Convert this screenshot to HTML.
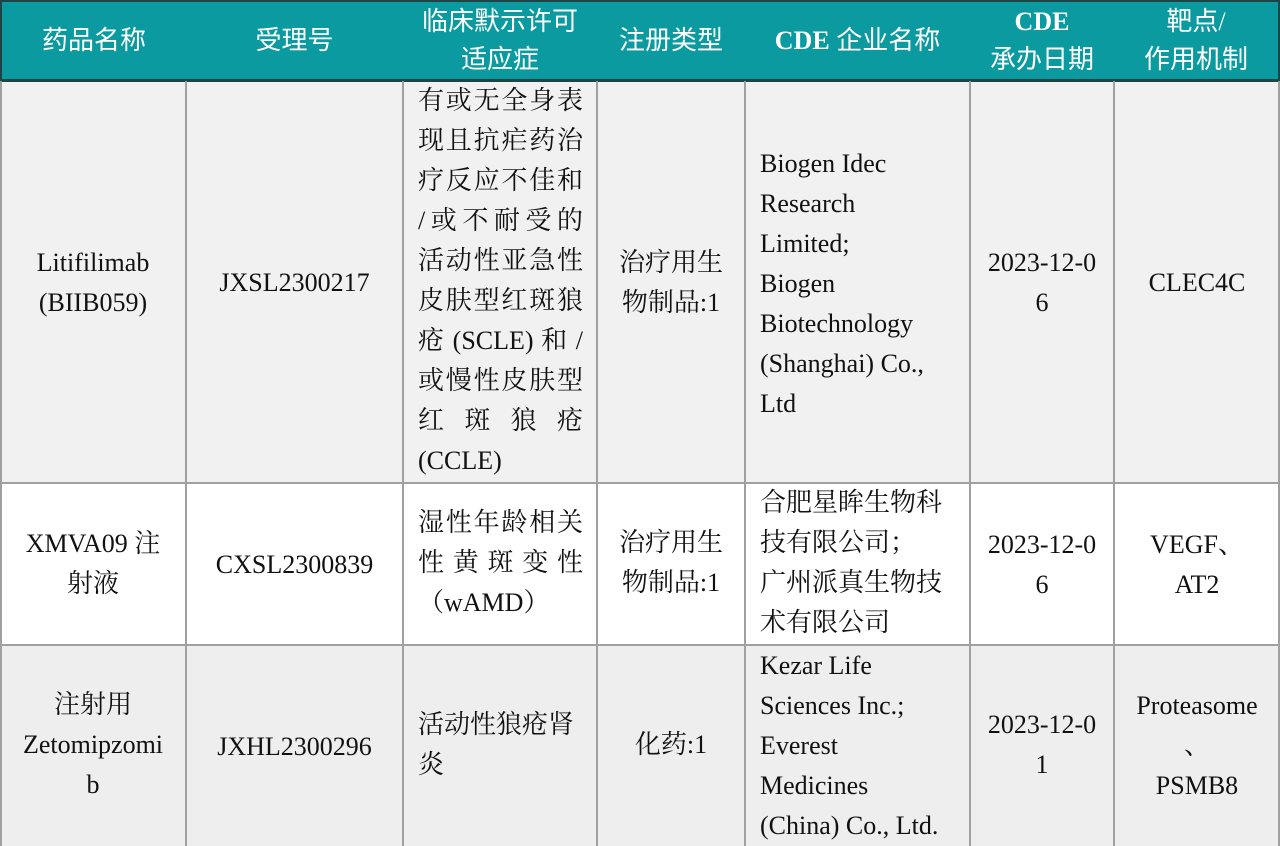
<!DOCTYPE html>
<html><head><meta charset="utf-8"><style>
body{margin:0;width:1280px;height:846px;overflow:hidden;background:#fff;position:relative;font-family:"Liberation Serif","Noto Serif CJK SC",serif;color:#111}
.bg{position:absolute;left:0;width:1280px}
.v{position:absolute;top:81px;height:765px;width:2px;background:#a0a0a0}
.h{position:absolute;left:0;width:1280px;height:2px;background:#a0a0a0}
.hd{position:absolute;top:0;height:81px;background:#0a9aa0;border-right:2px solid #1d4545;box-sizing:border-box;color:#fff;font-weight:normal;font-size:26px;line-height:38px;display:flex;flex-direction:column;justify-content:center;align-items:center;font-family:"Liberation Serif","Noto Sans CJK SC",sans-serif;white-space:nowrap}
.hd b{font-family:"Liberation Serif",serif}
.c{position:absolute;font-size:26px;line-height:40px;white-space:nowrap}
.ctr{text-align:center}
.j{text-align:justify;text-align-last:justify}
</style></head><body>
<div class="bg" style="top:81px;height:402px;background:#f1f1f1"></div>
<div class="bg" style="top:483px;height:162px;background:#fff"></div>
<div class="bg" style="top:645px;height:201px;background:#eeeeee"></div>

<div class="hd" style="left:0;width:188px;border-left:2px solid #1d4545">药品名称</div>
<div class="hd" style="left:186px;width:219px">受理号</div>
<div class="hd" style="left:403px;width:196px"><div>临床默示许可</div><div>适应症</div></div>
<div class="hd" style="left:597px;width:150px">注册类型</div>
<div class="hd" style="left:745px;width:227px"><div><b>CDE</b> 企业名称</div></div>
<div class="hd" style="left:970px;width:146px"><div><b>CDE</b></div><div>承办日期</div></div>
<div class="hd" style="left:1114px;width:166px"><div>靶点/</div><div>作用机制</div></div>
<div style="position:absolute;left:0;top:0;width:1280px;height:2px;background:#1d4545"></div>
<div style="position:absolute;left:0;top:79px;width:1280px;height:3px;background:#1d4545"></div>

<div class="v" style="left:0"></div>
<div class="v" style="left:185px"></div>
<div class="v" style="left:402px"></div>
<div class="v" style="left:596px"></div>
<div class="v" style="left:744px"></div>
<div class="v" style="left:969px"></div>
<div class="v" style="left:1113px"></div>
<div class="v" style="left:1278px"></div>
<div class="h" style="top:482px"></div>
<div class="h" style="top:644px"></div>

<!-- row1 -->
<div class="c ctr" style="left:0;width:186px;top:243px">Litifilimab<br>(BIIB059)</div>
<div class="c ctr" style="left:186px;width:217px;top:263px">JXSL2300217</div>
<div class="c" style="left:418px;width:165px;top:81px">
<div class="j">有或无全身表</div><div class="j">现且抗疟药治</div><div class="j">疗反应不佳和</div><div class="j">/或不耐受的</div><div class="j">活动性亚急性</div><div class="j">皮肤型红斑狼</div><div class="j">疮 (SCLE) 和 /</div><div class="j">或慢性皮肤型</div><div class="j">红 斑 狼 疮</div><div>(CCLE)</div></div>
<div class="c ctr" style="left:597px;width:148px;top:243px">治疗用生<br>物制品:1</div>
<div class="c" style="left:760px;top:144px">Biogen Idec<br>Research<br>Limited;<br>Biogen<br>Biotechnology<br>(Shanghai) Co.,<br>Ltd</div>
<div class="c ctr" style="left:970px;width:144px;top:243px">2023-12-0<br>6</div>
<div class="c ctr" style="left:1114px;width:166px;top:263px">CLEC4C</div>

<!-- row2 -->
<div class="c ctr" style="left:0;width:186px;top:524px">XMVA09 注<br>射液</div>
<div class="c ctr" style="left:186px;width:217px;top:545px">CXSL2300839</div>
<div class="c" style="left:418px;width:165px;top:503px"><div class="j">湿性年龄相关</div><div class="j">性 黄 斑 变 性</div><div>（wAMD）</div></div>
<div class="c ctr" style="left:597px;width:148px;top:523px">治疗用生<br>物制品:1</div>
<div class="c" style="left:760px;top:483px">合肥星眸生物科<br>技有限公司；<br>广州派真生物技<br>术有限公司</div>
<div class="c ctr" style="left:970px;width:144px;top:525px">2023-12-0<br>6</div>
<div class="c ctr" style="left:1114px;width:166px;top:525px">VEGF、<br>AT2</div>

<!-- row3 -->
<div class="c ctr" style="left:0;width:186px;top:685px">注射用<br>Zetomipzomi<br>b</div>
<div class="c ctr" style="left:186px;width:217px;top:727px">JXHL2300296</div>
<div class="c" style="left:418px;width:165px;top:705px">活动性狼疮肾<br>炎</div>
<div class="c ctr" style="left:597px;width:148px;top:725px">化药:1</div>
<div class="c" style="left:760px;top:646px">Kezar Life<br>Sciences Inc.;<br>Everest<br>Medicines<br>(China) Co., Ltd.</div>
<div class="c ctr" style="left:970px;width:144px;top:705px">2023-12-0<br>1</div>
<div class="c ctr" style="left:1114px;width:166px;top:686px">Proteasome<br>、<br>PSMB8</div>
</body></html>
